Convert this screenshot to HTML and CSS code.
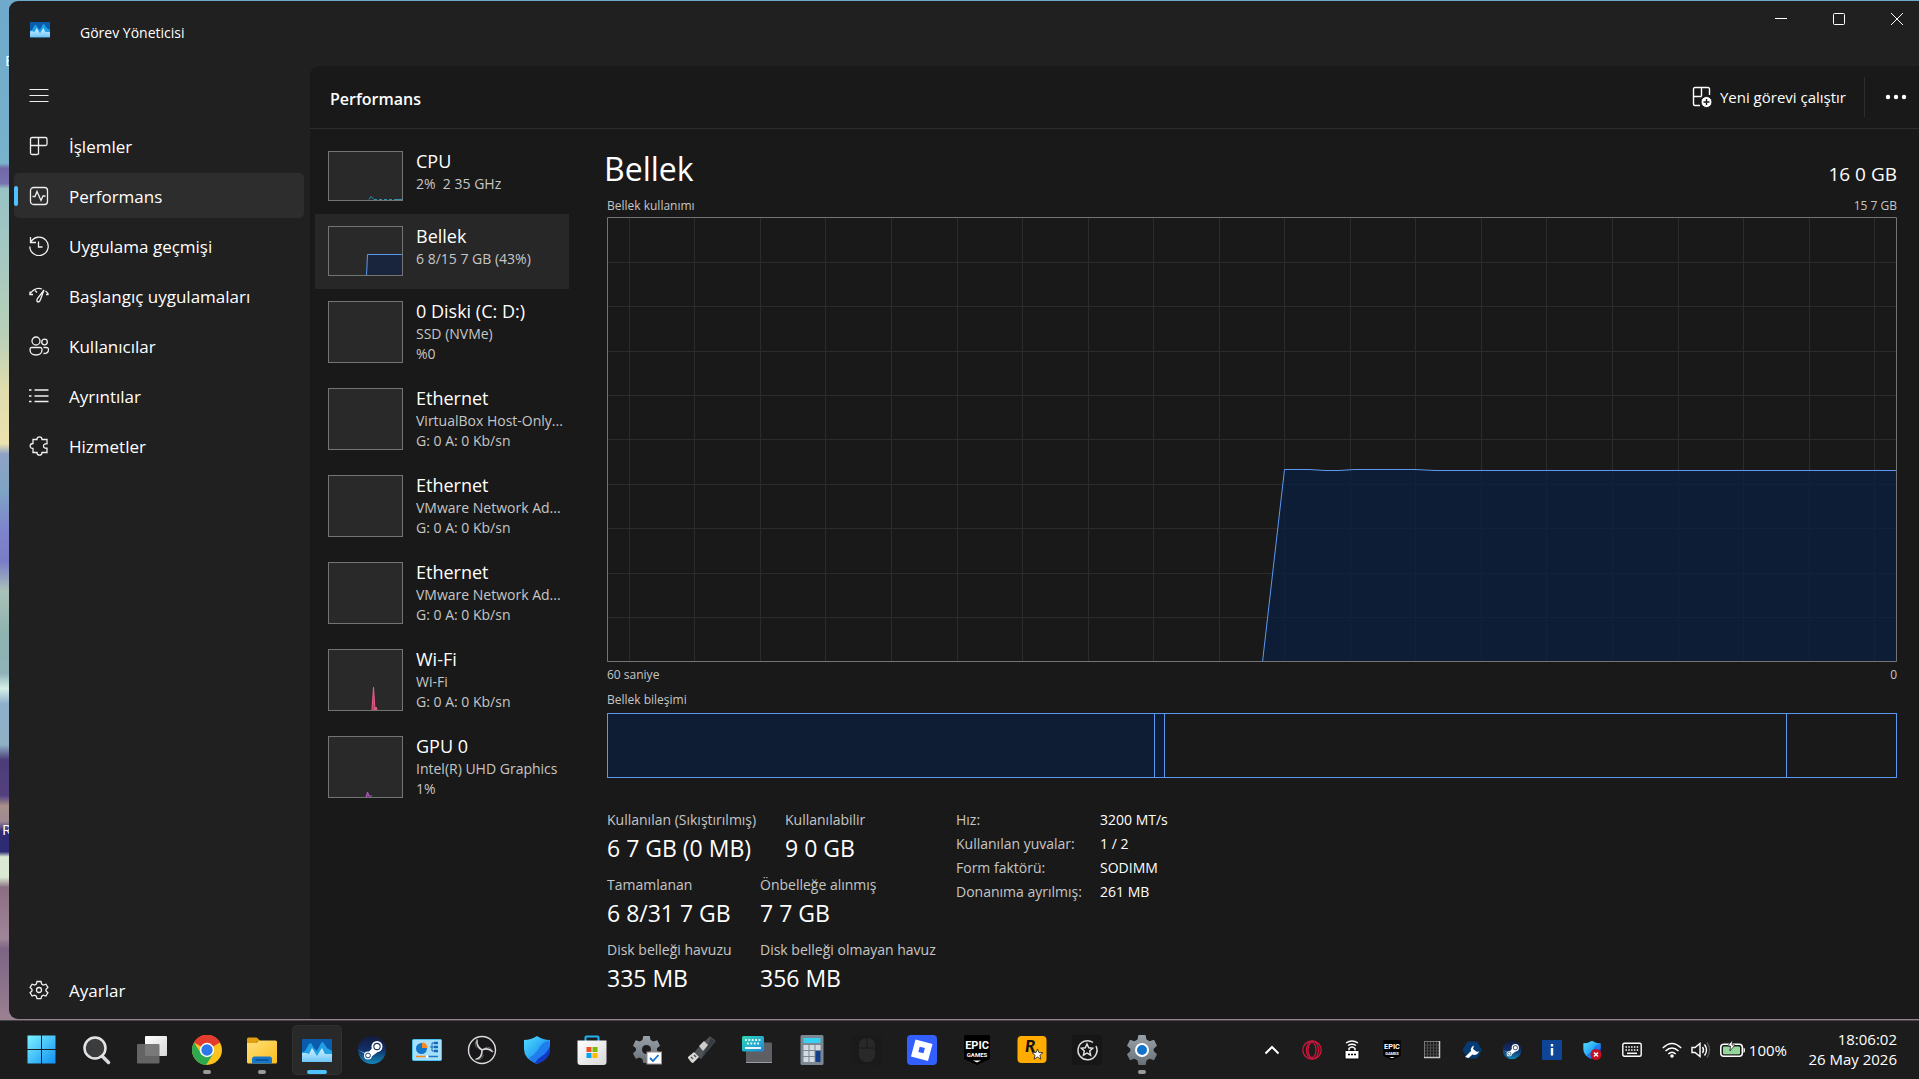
FILE: index.html
```html
<!DOCTYPE html>
<html lang="tr">
<head>
<meta charset="utf-8">
<title>Görev Yöneticisi</title>
<link rel="stylesheet" href="styles.css">
</head>
<body>
<svg class="defs" aria-hidden="true">
  <defs>
    <linearGradient id="g-win" x1="0" y1="0" x2="1" y2="1"><stop offset="0" stop-color="#7df3ff"/><stop offset="1" stop-color="#1090f5"/></linearGradient>
    <linearGradient id="g-steam" x1="0" y1="0" x2="0" y2="1"><stop offset="0" stop-color="#141a3c"/><stop offset="0.5" stop-color="#11306a"/><stop offset="1" stop-color="#1389b8"/></linearGradient>
    <linearGradient id="g-folder" x1="0" y1="0" x2="1" y2="1"><stop offset="0" stop-color="#ffe07a"/><stop offset="1" stop-color="#fbbd1e"/></linearGradient>
    <linearGradient id="g-shield" x1="0" y1="0" x2="1" y2="1"><stop offset="0" stop-color="#54e0ff"/><stop offset="0.5" stop-color="#2ba8f5"/><stop offset="1" stop-color="#1341cf"/></linearGradient>
    <linearGradient id="g-gear" x1="0" y1="0" x2="0" y2="1"><stop offset="0" stop-color="#9aa2a9"/><stop offset="1" stop-color="#697178"/></linearGradient>
    <linearGradient id="g-white" x1="0" y1="0" x2="1" y2="1"><stop offset="0" stop-color="#ffffff"/><stop offset="1" stop-color="#d8d8d8"/></linearGradient>
    <linearGradient id="g-ice" x1="0" y1="0" x2="0" y2="1"><stop offset="0" stop-color="#d6f3ff"/><stop offset="1" stop-color="#6cc4f7"/></linearGradient>
    <linearGradient id="g-kb" x1="0" y1="0" x2="1" y2="1"><stop offset="0" stop-color="#2fd8b4"/><stop offset="1" stop-color="#1c86dd"/></linearGradient>
    <symbol id="i-taskmgr" viewBox="0 0 30 24">
      <rect width="30" height="23" rx="1" fill="#0b5cad"/>
      <path d="M0 13l3-1 4-7 2-1 3 5 3 3 4-8 2-1 4 6 5 3v11H0z" fill="#1f9fe6"/>
      <path d="M0 14h4l3 1 3-6 5 8 5-8 3 6h7v8H0z" fill="url(#g-ice)"/>
    </symbol>
    <symbol id="i-steam" viewBox="0 0 30 30">
      <circle cx="15" cy="15" r="14" fill="url(#g-steam)"/>
      <path d="M1 15l9 4 7-8 5 5-8 6z" fill="#fff"/>
      <circle cx="20" cy="11.500" r="5.500" fill="#fff"/><circle cx="20" cy="11.500" r="3.700" fill="#18305e"/><circle cx="20" cy="11.500" r="2.600" fill="#fff"/>
      <circle cx="11" cy="20.500" r="4" fill="#fff"/><circle cx="11" cy="20.500" r="2.400" fill="none" stroke="#18406e"/>
    </symbol>
    <symbol id="i-shield" viewBox="0 0 30 30">
      <path d="M2 5q7 0 13-4 6 4 13 4v9q0 10-13 15Q2 24 2 14z" fill="url(#g-shield)"/>
      <path d="M27 6q-7 1-10 7T7 23q3 4 8 6l13-16z" fill="#1f7df0"/>
      <path d="M28 11q-3 7-8 10-4 2-7 7l2 1q13-5 13-15z" fill="#1238c8"/>
    </symbol>
    <symbol id="i-epic" viewBox="0 0 30 30">
      <path d="M3.500 0h23q1.500 0 1.500 1.500V24l-13 6-13-6V1.500Q2 0 3.500 0z" fill="#000"/>
      <text x="15" y="14" class="epic-big">EPIC</text>
      <text x="15" y="22" class="epic-small">GAMES</text>
      <path d="M11 25.500h8l-4 2z" fill="#fff"/>
    </symbol>
    <symbol id="i-gear" viewBox="0 0 30 30">
      <path d="M11.500 0h7l1 4.500 3 1.700L27 4.700l3 6-3.300 3v2.600l3.300 3-3 6-4.500-1.500-3 1.700-1 4.500h-7l-1-4.500-3-1.700L3 25.300l-3-6 3.300-3v-2.600L0 10.700l3-6 4.500 1.500 3-1.700z" fill="url(#g-gear)"/>
    </symbol>
  </defs>
</svg>

<div class="desktop">
  <span class="desk-label desk-label-top">E</span>
  <span class="desk-label desk-label-low">R</span>

  <div class="window">
    <header class="titlebar">
      <svg class="app-icon" viewBox="0 0 30 24" preserveAspectRatio="none"><use href="#i-taskmgr"/></svg>
      <h1 class="app-title">Görev Yöneticisi</h1>
      <div class="caption">
        <button aria-label="Simge durumuna küçült"><svg viewBox="0 0 12 12"><path d="M0 5.500h12"/></svg></button>
        <button aria-label="Ekranı kapla"><svg viewBox="0 0 12 12"><rect x="0.500" y="0.500" width="11" height="11" rx="1"/></svg></button>
        <button aria-label="Kapat"><svg viewBox="0 0 12 12"><path d="M0 0l12 12M12 0L0 12"/></svg></button>
      </div>
    </header>

    <div class="workspace">
      <nav class="sidebar">
        <button class="nav-item" aria-label="Gezinti"><svg class="line-icon" viewBox="0 0 20 20"><path d="M.5 3.500h19M.5 9.500h19M.5 15.500h19" stroke-width="1"/></svg></button>
        <a class="nav-item" href="#"><svg class="line-icon" viewBox="0 0 20 20"><path d="M3 1.500h13.500q1.500 0 1.500 1.500v5q0 1.500-1.500 1.500h-15M9.500 1.500v17M3 1.500Q1.500 1.500 1.500 3v14q0 1.500 1.500 1.500h5q1.500 0 1.500-1.500"/></svg><span>İşlemler</span></a>
        <a class="nav-item active" href="#" aria-current="page"><svg class="line-icon" viewBox="0 0 20 20"><rect x="1.500" y="1.500" width="17" height="17" rx="3"/><path d="M3.500 10.500h2.500l2-5 4 9 2-4.500h2.500"/></svg><span>Performans</span></a>
        <a class="nav-item" href="#"><svg class="line-icon" viewBox="0 0 20 20"><path d="M1.500 1v5.500H7M1.800 6.200A9.200 9.200 0 1 1 .8 10.500M9.500 5.500v5.500h4"/></svg><span>Uygulama geçmişi</span></a>
        <a class="nav-item" href="#"><svg class="line-icon" viewBox="0 0 20 20"><path d="M.5 8.500Q6 .5 13 3M1 5.500v3h3M16.500 5q2 1.500 3 3.500M17 8.500h2.500M15 4L8.500 12.500q-1.500 3 .5 3.500 1.800 0 2.500-2.500zM6 4.500l2 2"/></svg><span>Başlangıç uygulamaları</span></a>
        <a class="nav-item" href="#"><svg class="line-icon" viewBox="0 0 20 20"><circle cx="7" cy="5" r="4"/><circle cx="15.500" cy="6" r="2.800"/><path d="M2.500 11.500h9q1.500 0 1.500 2 0 5.500-6 5.500T1 13.500q0-2 1.500-2zM14.500 11.500h3q2 0 2 2 0 4-5 4"/></svg><span>Kullanıcılar</span></a>
        <a class="nav-item" href="#"><svg class="line-icon" viewBox="0 0 20 20"><path d="M5.500 4h14M5.500 10h14M5.500 15.500h14M0 4h2.500M0 10h2.500M0 15.500h2.500"/></svg><span>Ayrıntılar</span></a>
        <a class="nav-item" href="#"><svg class="line-icon" viewBox="0 0 20 20"><path d="M4 3.500h4Q8 .8 10.500.8T13 3.500h5v4.300q-3.500-.3-3.500 2.200t3.500 2.200v4.300h-5q0 2.700-2.500 2.700T8 16.500H4v-4Q1.200 12.500 1.200 10T4 7.500z"/></svg><span>Hizmetler</span></a>
        <a class="nav-item nav-settings" href="#"><svg class="line-icon" viewBox="0 0 20 20"><path d="M8 1.500h4l.7 2.600 1.600.9 2.600-.8 2 3.300-1.900 1.800v1.600l1.900 1.800-2 3.300-2.600-.8-1.600.9-.7 2.600H8l-.7-2.600-1.600-.9-2.600.8-2-3.300L3 10.900V9.300L1.100 7.500l2-3.300 2.600.8 1.600-.9z"/><circle cx="10" cy="10" r="2.500"/></svg><span>Ayarlar</span></a>
      </nav>

      <main class="panel">
        <div class="panel-head">
          <h2>Performans</h2>
          <button class="run-task"><svg viewBox="0 0 20 22"><path d="M17.500 9V3q0-1.500-1.500-1.500H3Q1.500 1.500 1.500 3v15q0 1.500 1.500 1.500h5M9.500 1.500v9M1.500 10.500h8"/><circle cx="14.500" cy="16" r="5.500" class="solid"/><path d="M14.500 13v6M11.500 16h6" class="dark"/></svg>Yeni görevi çalıştır</button>
          <button class="more" aria-label="Diğer"><svg viewBox="0 0 22 6"><circle cx="3" cy="3" r="2.200"/><circle cx="11" cy="3" r="2.200"/><circle cx="19" cy="3" r="2.200"/></svg></button>
        </div>

        <div class="panel-body">
          <div class="resources">
            <button class="resource"><svg class="thumb" viewBox="0 0 75 50"><path d="M41 48.500l2-3 3 3h3M51 48.500h3M56 48.500h3M61 48.500h3M66 48.500h8" stroke="#2f93ad"/></svg>
              <span class="info"><strong>CPU</strong><span>2%&nbsp; 2 35 GHz</span></span></button>
            <button class="resource selected"><svg class="thumb" viewBox="0 0 75 50"><path d="M38.500 50l1-21.500H75V50z" fill="#18253c" stroke="#5c98f2"/></svg>
              <span class="info"><strong>Bellek</strong><span>6 8/15 7 GB (43%)</span></span></button>
            <button class="resource tall"><svg class="thumb" viewBox="0 0 75 62"></svg>
              <span class="info"><strong>0 Diski (C: D:)</strong><span>SSD (NVMe)</span><span>%0</span></span></button>
            <button class="resource tall"><svg class="thumb" viewBox="0 0 75 62"></svg>
              <span class="info"><strong>Ethernet</strong><span>VirtualBox Host-Only...</span><span>G: 0 A: 0 Kb/sn</span></span></button>
            <button class="resource tall"><svg class="thumb" viewBox="0 0 75 62"></svg>
              <span class="info"><strong>Ethernet</strong><span>VMware Network Ad...</span><span>G: 0 A: 0 Kb/sn</span></span></button>
            <button class="resource tall"><svg class="thumb" viewBox="0 0 75 62"></svg>
              <span class="info"><strong>Ethernet</strong><span>VMware Network Ad...</span><span>G: 0 A: 0 Kb/sn</span></span></button>
            <button class="resource tall"><svg class="thumb" viewBox="0 0 75 62"><path d="M44 61l1.500-23L47 61l1-3 1 3" fill="#b8405f" stroke="#e8608a"/></svg>
              <span class="info"><strong>Wi-Fi</strong><span>Wi-Fi</span><span>G: 0 A: 0 Kb/sn</span></span></button>
            <button class="resource tall"><svg class="thumb" viewBox="0 0 75 62"><path d="M38 61l1.500-5 1.500 4h3" fill="#8a3f96" stroke="#b45ac4"/></svg>
              <span class="info"><strong>GPU 0</strong><span>Intel(R) UHD Graphics</span><span>1%</span></span></button>
          </div>

          <section class="detail">
            <div class="detail-head"><h3>Bellek</h3><span class="capacity">16 0 GB</span></div>
            <div class="axis axis-top"><span>Bellek kullanımı</span><span>15 7 GB</span></div>
            <svg class="graph" viewBox="0 0 1290 445" preserveAspectRatio="none">
              <g class="grid">
                <path d="M0 45.500h1290M0 89.500h1290M0 134.500h1290M0 178.500h1290M0 222.500h1290M0 267.500h1290M0 311.500h1290M0 356.500h1290M0 400.500h1290"/>
                <path d="M22.500 0v445M87.500 0v445M153.500 0v445M218.500 0v445M284.500 0v445M350.500 0v445M415.500 0v445M481.500 0v445M546.500 0v445M612.500 0v445M677.500 0v445M743.500 0v445M808.500 0v445M874.500 0v445M939.500 0v445M1005.500 0v445M1071.500 0v445M1136.500 0v445M1202.500 0v445M1267.500 0v445"/>
              </g>
              <path class="area" d="M655.500 445L677.500 252.500H702L718 253.500H732L748 252.500H808L828 253.500H1290V445z"/>
              <path class="curve" d="M655.500 445L677.500 252.500H702L718 253.500H732L748 252.500H808L828 253.500H1290"/>
              <rect class="frame" x="0.500" y="0.500" width="1289" height="444"/>
            </svg>
            <div class="axis"><span>60 saniye</span><span>0</span></div>
            <div class="axis axis-bar"><span>Bellek bileşimi</span></div>
            <div class="composition">
              <div class="used" style="width:42.450%"></div>
              <div class="used" style="width:0.800%"></div>
              <div style="width:48.250%"></div>
            </div>

            <div class="stats">
              <div class="stat-rows">
                <dl class="stat-row wide"><div><dt>Kullanılan (Sıkıştırılmış)</dt><dd>6 7 GB (0 MB)</dd></div><div><dt>Kullanılabilir</dt><dd>9 0 GB</dd></div></dl>
                <dl class="stat-row"><div><dt>Tamamlanan</dt><dd>6 8/31 7 GB</dd></div><div><dt>Önbelleğe alınmış</dt><dd>7 7 GB</dd></div></dl>
                <dl class="stat-row"><div><dt>Disk belleği havuzu</dt><dd>335 MB</dd></div><div><dt>Disk belleği olmayan havuz</dt><dd>356 MB</dd></div></dl>
              </div>
              <table class="specs">
                <tr><th scope="row">Hız:</th><td>3200 MT/s</td></tr>
                <tr><th scope="row">Kullanılan yuvalar:</th><td>1 / 2</td></tr>
                <tr><th scope="row">Form faktörü:</th><td>SODIMM</td></tr>
                <tr><th scope="row">Donanıma ayrılmış:</th><td>261 MB</td></tr>
              </table>
            </div>
          </section>
        </div>
      </main>
    </div>
  </div>
</div>

<footer class="taskbar">
  <div class="apps">
    <button aria-label="Başlat"><svg viewBox="0 0 30 30"><path d="M.5.5H14V14H.5zM15 .5H28.500V14H15zM.5 15H14V28.500H.5zM15 15H28.500V28.500H15z" fill="url(#g-win)"/></svg></button>
    <button aria-label="Ara"><svg viewBox="0 0 30 30"><path d="M19.500 20.500l7 7" stroke="#d6d9dc" stroke-width="3.500" stroke-linecap="round"/><circle cx="13" cy="13" r="10.500" fill="#3a3c3e" stroke="#e4e4e4" stroke-width="2.500"/></svg></button>
    <button aria-label="Görev görünümü"><svg viewBox="0 0 30 30"><rect x="8" y="1" width="22" height="20" rx="1" fill="url(#g-white)"/><rect x="0" y="9" width="22.500" height="19.500" rx="1" fill="#6d6d6d" fill-opacity="0.900"/></svg></button>
    <button class="open" aria-label="Chrome"><svg viewBox="0 0 30 30"><circle cx="15" cy="15" r="15" fill="#fcc31e"/><path d="M15 15L2 7.500A15 15 0 0 1 28 7.500z" fill="#e33b2e"/><path d="M15 8h13.300A15 15 0 0 0 2 7.500z" fill="#e33b2e"/><path d="M2 7.500A15 15 0 0 0 14 30l7.500-11.500L9 18.500z" fill="#2da94f"/><circle cx="15" cy="15" r="7.200" fill="#fff"/><circle cx="15" cy="15" r="5.700" fill="#2a78ea"/></svg></button>
    <button class="open" aria-label="Dosya Gezgini"><svg viewBox="0 0 30 30"><path d="M0 4q0-1.500 1.500-1.500H9q1 0 1.700.8L13 6h-2l-2 2H0z" fill="#e0a010"/><path d="M0 8h9l3-2.500h16.500Q30 5.500 30 7v20q0 1.500-1.500 1.500h-27Q0 28.500 0 27z" fill="url(#g-folder)"/><path d="M5 28.500V24q0-2.500 2.500-2.500h15Q25 21.500 25 24v4.500z" fill="#1577c9"/><path d="M8.500 25h13" stroke="#0b4a8c" stroke-width="1.500"/></svg></button>
    <button class="open current" aria-label="Görev Yöneticisi"><svg viewBox="0 0 30 30"><use href="#i-taskmgr" y="4" width="30" height="24"/></svg></button>
    <button aria-label="Steam"><svg viewBox="0 0 30 30"><use href="#i-steam"/></svg></button>
    <button aria-label="Denetim Masası"><svg viewBox="0 0 30 30"><rect x="0.500" y="4.500" width="29" height="21" rx="1" fill="#a6e0fb" stroke="#4cc0f0"/><circle cx="9.500" cy="13.500" r="5.500" fill="#1376cc"/><path d="M10 7.500q5 0 5.500 5.500H10z" fill="#f58a1f"/><path d="M18 12h4M20 8v8M20 8h2M20 16h2" stroke="#1d66ad" fill="none"/><path d="M22 8h4M22 12h4M22 16h4" stroke="#1668b8" stroke-width="2.600"/><path d="M4 21.500h9" stroke="#f58a1f" stroke-width="1.500"/><path d="M13 21.500h13" stroke="#1d78c4" stroke-width="1.500"/><circle cx="15" cy="21.500" r="1.500" fill="#fff"/></svg></button>
    <button aria-label="OBS"><svg viewBox="0 0 30 30"><circle cx="15" cy="15" r="13.500" fill="#191719" stroke="#dcdcdc" stroke-width="1.400"/><path d="M10 4.500q-1 7 5 10.500M26 17q-5-5-11-2M8.500 24.500q7-1.500 6.500-9.500" fill="none" stroke="#d8d8d8" stroke-width="1.600"/><path d="M10 4.500q-4 5 1 9M26 17q-2-6-8-4.500M8.500 24.500q6 1.500 8-4.500" fill="none" stroke="#777" stroke-width="0.800"/></svg></button>
    <button aria-label="Windows Güvenliği"><svg viewBox="0 0 30 30"><use href="#i-shield"/></svg></button>
    <button aria-label="Microsoft Store"><svg viewBox="0 0 30 30"><path d="M8.500 7V2.200Q8.500 1.500 9.500 1.500h11q1 0 1 .7V7" fill="none" stroke="#22b3f0" stroke-width="2"/><path d="M.5 5.500h29V27q0 3-3 3h-23q-3 0-3-3z" fill="url(#g-white)"/><path d="M9.500 12h5v5h-5z" fill="#f25022"/><path d="M15.500 12h5v5h-5z" fill="#7fba00"/><path d="M9.500 18h5v5h-5z" fill="#00a4ef"/><path d="M15.500 18h5v5h-5z" fill="#ffb900"/></svg></button>
    <button aria-label="Hizmetler"><svg viewBox="0 0 30 30"><use href="#i-gear" x="1" y="1" width="27" height="27"/><circle cx="14.500" cy="14.500" r="4.500" fill="#1d1d1d"/><rect x="15" y="17" width="14.500" height="12" fill="#fff" stroke="#9a8d8d"/><path d="M18 23l3 3 5.500-6" fill="none" stroke="#1673d2" stroke-width="1.800"/></svg></button>
    <button aria-label="USB"><svg viewBox="0 0 30 30"><path d="M9 15L22 2q1-1 2 0l4 3q1 1 0 2L14 24l-7-5z" fill="#4c5256"/><path d="M24 3l4 3L15 22z" fill="#363b3f"/><path d="M12 11l5-5 4 4-5 6z" fill="#cfcdca"/><path d="M1 22l6-5 5 5-6 6q-1 0-2-1l-3-4z" fill="#d9d9d6"/><path d="M4 22l2 2M7 20l2 2" stroke="#555" stroke-width="1.500"/></svg></button>
    <button aria-label="Ekran klavyesi"><svg viewBox="0 0 30 30"><rect x="4" y="7.500" width="26" height="20.500" rx="1" fill="#5d5f63"/><path d="M4 27.500h26" stroke="#9b9da0"/><rect x="0" y="1" width="22" height="15.500" rx="1.500" fill="url(#g-kb)"/><path d="M3 5h16M5 8.500h13" stroke="#eafcff" stroke-width="1.800" stroke-dasharray="1.800 1.600"/><path d="M3 13h16" stroke="#fff" stroke-width="1.800"/></svg></button>
    <button aria-label="Hesap Makinesi"><svg viewBox="0 0 30 30"><rect x="3.500" y="0" width="23" height="30" rx="1.500" fill="#7c8791"/><rect x="6.500" y="3" width="17" height="5" fill="#38d1f3"/><path d="M6.500 10h5v5h-5zM12.500 10h5v5h-5zM18.500 10h5v5h-5zM6.500 16h5v5h-5zM12.500 16h5v5h-5zM6.500 22h5v5h-5zM12.500 22h5v5h-5z" fill="#d3dae2"/><path d="M18.500 16h5v11h-5z" fill="#123f8a"/></svg></button>
    <button aria-label="Fare"><svg viewBox="0 0 30 30"><rect width="30" height="30" rx="3" fill="#1a1a1a"/><rect x="7" y="3" width="16" height="24" rx="7" fill="#292929"/><path d="M7 13h16M15 3v10" stroke="#1a1a1a"/></svg></button>
    <button aria-label="Roblox"><svg viewBox="0 0 30 30"><rect width="30" height="30" rx="4" fill="#335fff"/><path d="M8.500 4.500l17 4.500-4.500 17L4 21.500z" fill="#fff"/><path d="M12.700 11.700l5.200 1.300-1.400 5.300-5.200-1.400z" fill="#335fff"/></svg></button>
    <button aria-label="Epic Games"><svg viewBox="0 0 30 30"><use href="#i-epic"/></svg></button>
    <button aria-label="Rockstar Games"><svg viewBox="0 0 30 30"><rect x="0.500" y="1" width="29" height="27" rx="4" fill="#ffab00"/><text x="8" y="17" class="rockstar">R</text><path d="M20.500 14l1.400 3.500 4 .2-3 2.500 1 4-3.400-2.200-3.400 2.200 1-4-3-2.500 4-.2z" fill="#fff" stroke="#222" stroke-width="0.800"/></svg></button>
    <button aria-label="Yıldız"><svg viewBox="0 0 30 30"><rect width="30" height="30" rx="4" fill="#161616"/><path d="M21 7.500A9.500 9.500 0 1 0 24 11" fill="none" stroke="#dcdcdc" stroke-width="1.500"/><path d="M15 9l1.700 3.800 4 .4-3 2.800.9 4.200L15 18l-3.600 2.200.9-4.200-3-2.800 4-.4z" fill="none" stroke="#e6e6e6" stroke-width="1.400"/></svg></button>
    <button class="open" aria-label="Ayarlar"><svg viewBox="0 0 30 30"><use href="#i-gear" width="30" height="30"/><circle cx="15" cy="15" r="6" fill="#1272cc" stroke="#fff" stroke-width="2"/></svg></button>
  </div>

  <div class="tray">
    <button aria-label="Gizli simgeleri göster"><svg viewBox="0 0 20 20"><path d="M3.500 13.500L10 7l6.500 6.500" fill="none" stroke="#fff" stroke-width="2"/></svg></button>
    <button aria-label="Opera"><svg viewBox="0 0 20 20"><g fill="none" stroke="#d5173f" stroke-width="1.200"><circle cx="10" cy="10" r="9.200"/><ellipse cx="10" cy="10" rx="4" ry="7.500"/><ellipse cx="10.500" cy="10" rx="6" ry="8.800"/></g></svg></button>
    <button aria-label="Kablosuz kilit"><svg viewBox="0 0 20 20"><rect x="3" y="10.500" width="14" height="8.500" rx="1" fill="#fff" stroke="#000"/><path d="M6 14.500h2M9 14.500h2M12 14.500h2" stroke="#000" stroke-width="1.500"/><path d="M7 10.500V8.500q3-3 6 0v2M6 5.500q4-2.500 8 0M4 3q6-4 12 0" fill="none" stroke="#fff" stroke-width="1.400"/></svg></button>
    <button aria-label="Epic Games"><svg viewBox="0 0 30 30"><use href="#i-epic"/></svg></button>
    <button aria-label="Görev Yöneticisi"><svg viewBox="0 0 20 20"><rect x="2.500" y="1.500" width="15" height="16" fill="#1b1b1b" stroke="#777"/><path d="M3 5h14M3 8h14M3 11h14M3 14h14M5.500 2v15M8.500 2v15M11.500 2v15M14.500 2v15" stroke="#4b4b4b"/><path d="M2 17.500h15.500V1" fill="none" stroke="#c6c6c6" stroke-width="1.500"/></svg></button>
    <button aria-label="Onarım"><svg viewBox="0 0 20 20"><path d="M5.500 1.500h9.500L20 10l-5 8.500H5.500L.5 10z" fill="#063a72"/><path d="M3 17l6-6q-1-3.500 3-5.500l-1 3.500 4 3 2-1q-1 4-5 4l-1.500-.5L6.500 18z" fill="#fff"/></svg></button>
    <button aria-label="Steam"><svg viewBox="0 0 30 30"><use href="#i-steam"/></svg></button>
    <button aria-label="Bilgi"><svg viewBox="0 0 20 20"><rect width="20" height="20" rx="1" fill="#0f4596"/><path d="M10 4v2.500M10 8v7.500" stroke="#fff" stroke-width="2.400"/></svg></button>
    <button aria-label="Windows Güvenliği"><svg viewBox="0 0 20 20"><use href="#i-shield" width="20" height="20"/><circle cx="14" cy="14.500" r="5.500" fill="#c50f1f"/><path d="M12 12.500l4 4M16 12.500l-4 4" stroke="#fff" stroke-width="1.500"/></svg></button>
    <button aria-label="Dokunmatik klavye"><svg viewBox="0 0 20 20"><rect x="0.800" y="3.300" width="18.400" height="13" rx="1.500" fill="none" stroke="#fff" stroke-width="1.400"/><path d="M3.500 7h13M3.500 10h13" stroke="#fff" stroke-width="1.500" stroke-dasharray="1.500 1.300"/><path d="M5 13.300h10" stroke="#fff" stroke-width="1.500"/></svg></button>
    <button class="system" aria-label="Ağ, ses ve pil">
      <svg viewBox="0 0 20 20"><g fill="none" stroke="#fff" stroke-width="1.500"><path d="M.8 8q9.200-9 18.400 0M3.500 11q6.500-6 13 0M6.300 14q3.700-3.500 7.400 0"/></g><circle cx="10" cy="16" r="1.800" fill="#fff"/></svg>
      <svg viewBox="0 0 20 20"><g fill="none" stroke="#fff" stroke-width="1.400"><path d="M1 7.500h3L9 3.500v13L4 12.500H1zM11.500 7q2 3 0 6M13.500 4.500q4 5.500 0 11"/><path d="M16 2.500q5 7.500 0 15" stroke="#555"/></g></svg>
      <svg class="battery" viewBox="0 0 25 20"><rect x="0.800" y="4.300" width="21.500" height="12" rx="3" fill="none" stroke="#fff" stroke-width="1.500"/><rect x="3" y="6.500" width="17" height="7.700" rx="1" fill="#93d79a"/><path d="M23.500 7.500q1.500 0 1.500 2.800t-1.500 2.700z" fill="#fff"/><path d="M12.500 0l-5 6h3l-.5 5 5-6h-3z" fill="#fff" stroke="#1d1d1d" stroke-width="0.800"/></svg>
      <span>100%</span>
    </button>
    <button class="clock"><span>18:06:02</span><span>26 May 2026</span></button>
  </div>
</footer>
</body>
</html>
```
FILE: styles.css
```css
* { box-sizing: border-box; }

body {
  margin: 0;
  min-height: 100vh;
  display: flex;
  flex-direction: column;
  background: #1c1c1c;
  color: #fff;
  font-family: "Open Sans", "Noto Sans", sans-serif;
  font-size: 14px;
  line-height: 20px;
}

button {
  margin: 0;
  padding: 0;
  border: 0;
  background: none;
  color: inherit;
  font: inherit;
  text-align: left;
}

h1, h2, h3, dl, dd { margin: 0; }

.defs { position: absolute; width: 0; height: 0; }

/* Desktop and window */
.desktop {
  position: relative;
  flex: 1;
  display: flex;
  overflow: hidden;
  padding: 1px 0 1px 9px;
  border-bottom: 1px solid #47474a;
  background:
    linear-gradient(to bottom, #6fa9cb 0, #79b2cb 16%, #7068a8 16.500%, #7872b0 18%, #98c2c4 18.500%, #a5c8c2 25%, #b9d0b8 33%, #dfdcae 38%, #ece2ae 43.500%, #8fa3c4 44.500%, #7fa4c4 48%, #7d84cc 52%, #7a7cc6 55%, #a9c3b8 58%, #8fb3b0 62%, #8fb3b8 66%, #d5eee8 67.500%, #8fb0cc 69%, #8fb0c4 73%, #4b3d78 74.500%, #53417e 78%, #a88f8a 79%, #a08a92 80.500%, #2f2b73 81.500%, #2f2b73 83.500%, #dbe8d4 84%, #dbe8d4 86%, #8b6f80 87%, #a08698 92%, #7c6486 93%, #9b8190 100%);
}

.desk-label { position: absolute; font-size: 15px; }
.desk-label-top { left: 5px; top: 50px; }
.desk-label-low { left: 2px; top: 819px; }

.window {
  position: relative;
  flex: 1;
  min-width: 0;
  display: flex;
  flex-direction: column;
  border-radius: 9px 0 0 9px;
  background: #202020;
}

.titlebar { display: flex; align-items: center; height: 65px; padding: 0 0 2px 21px; }
.app-icon { width: 20px; height: 16px; margin-bottom: 5px; }
.app-title { margin-left: 30px; font-size: 14px; font-weight: 400; }
.caption { display: flex; gap: 14px; align-self: flex-start; margin-left: auto; }
.caption button { display: grid; place-items: center; width: 44px; height: 36px; }
.caption svg { width: 12px; height: 12px; overflow: visible; fill: none; stroke: #fff; }

.workspace { flex: 1; display: flex; }

/* Sidebar */
.sidebar {
  display: flex;
  flex-direction: column;
  gap: 5px;
  width: 301px;
  padding: 7px 6px 7px 5px;
}
.nav-item {
  position: relative;
  display: flex;
  align-items: center;
  gap: 20px;
  height: 45px;
  padding-left: 15px;
  border-radius: 5px;
  color: #fff;
  font-size: 17px;
  text-decoration: none;
}
.nav-item span { padding-top: 2px; }
.nav-item.active { background: #2d2d2d; }
.nav-item.active::before {
  content: "";
  position: absolute;
  left: 0;
  width: 4px;
  height: 20px;
  border-radius: 2px;
  background: #4cc2ff;
}
.nav-settings { margin-top: auto; }
.line-icon { width: 20px; height: 20px; fill: none; stroke: #f0f0f0; stroke-width: 1.300; }

/* Performance panel */
.panel {
  flex: 1;
  min-width: 0;
  display: flex;
  flex-direction: column;
  border-radius: 9px 0 0 0;
  background: #191919;
}
.panel-head {
  display: flex;
  align-items: center;
  height: 63px;
  padding: 0 12px 0 20px;
  border-bottom: 1px solid #2d2d2d;
}
.panel-head h2 { padding-top: 3px; font-size: 16px; font-weight: 600; }
.run-task { display: flex; align-items: center; gap: 8px; margin-left: auto; font-size: 15px; }
.run-task svg { width: 20px; height: 22px; fill: none; stroke: #fff; stroke-width: 1.400; }
.run-task .solid { fill: #fff; stroke: #191919; stroke-width: 1; }
.run-task .dark { stroke: #191919; }
.more {
  display: grid;
  place-items: center;
  height: 40px;
  margin-left: 18px;
  padding-left: 20px;
  border-left: 1px solid #2d2d2d;
}
.more svg { width: 22px; height: 6px; fill: #fff; }

.panel-body { flex: 1; display: flex; }

.resources { width: 259px; padding: 10px 0 0 5px; }
.resource {
  display: flex;
  gap: 13px;
  width: 100%;
  padding: 12px 0 13px 13px;
  white-space: nowrap;
}
.resource.selected { background: #272727; }
.thumb {
  flex: none;
  width: 75px;
  height: 50px;
  background: #292929;
  outline: 1px solid #747474;
  outline-offset: -1px;
  fill: none;
}
.tall .thumb { height: 62px; }
.info { display: flex; flex-direction: column; margin: -2px 0; color: #c6c6c6; }
.info strong { color: #fff; font-size: 18px; font-weight: 400; line-height: 25px; }

/* Memory detail */
.detail { flex: 1; min-width: 0; display: flex; flex-direction: column; padding: 18px 22px 25px 38px; }
.detail-head { display: flex; align-items: baseline; justify-content: space-between; }
.detail-head h3 { margin-left: -3px; font-size: 32px; font-weight: 400; line-height: 44px; }
.capacity { font-size: 19px; }
.axis { display: flex; justify-content: space-between; margin-top: 3px; color: #c6c6c6; font-size: 12px; }
.axis-top { margin: 5px 0 1px; }
.axis-bar { margin: 5px 0 3px; }

.graph { display: block; flex: 1 1 300px; width: 100%; height: 300px; min-height: 200px; }
.graph path, .graph rect { vector-effect: non-scaling-stroke; fill: none; }
.graph .grid path { stroke: #2c2c2c; }
.graph .area { fill: #0a1f3f; fill-opacity: 0.750; }
.graph .curve { stroke: #5c98f2; }
.graph .frame { stroke: #747474; }

.composition { display: flex; height: 65px; border: 1px solid #5c98f2; }
.composition div { border-right: 1px solid #5c98f2; }
.composition .used { background: #0e1d34; }

.stats { display: flex; margin-top: 30px; }
.stat-rows { display: flex; flex-direction: column; gap: 11px; width: 349px; padding-top: 2px; white-space: nowrap; }
.stat-row { display: grid; grid-template-columns: 153px 1fr; }
.stat-row.wide { grid-template-columns: 178px 1fr; }
.stat-row dt { color: #c6c6c6; }
.stat-row dd { padding-top: 2px; font-size: 23px; line-height: 32px; }

.specs { align-self: flex-start; border-collapse: collapse; line-height: 24px; white-space: nowrap; }
.specs th { width: 144px; padding: 0; color: #c6c6c6; font-weight: 400; text-align: left; }
.specs td { padding: 0; }

/* Taskbar */
.taskbar { display: flex; justify-content: space-between; height: 58px; padding: 4px 22px 4px 17px; background: #1c1c1c; }
.apps { display: flex; gap: 5px; }
.apps button {
  position: relative;
  display: grid;
  place-items: center;
  width: 50px;
  height: 50px;
  border-radius: 5px;
}
.apps svg { width: 30px; height: 30px; }
.apps .current { background: #292929; box-shadow: inset 0 0 0 1px #303030; }
.apps .open::after {
  content: "";
  position: absolute;
  bottom: 1px;
  width: 8px;
  height: 4px;
  border-radius: 2px;
  background: #9a9a9a;
}
.apps .current::after { width: 20px; background: #4cc2ff; }

.tray { display: flex; align-items: center; }
.tray button { display: grid; place-items: center; width: 40px; height: 50px; }
.tray svg { width: 20px; height: 20px; }
.tray .system { display: flex; align-items: center; width: auto; padding-left: 10px; gap: 9px; font-size: 15px; }
.tray .system .battery { width: 25px; }
.tray .system span { margin-left: -5px; }
.tray .clock {
  display: flex;
  flex-direction: column;
  align-items: flex-end;
  justify-content: center;
  width: 110px;
  padding-bottom: 2px;
  font-size: 15px;
}

/* Lettering inside the game launcher icons */
.epic-big { fill: #fff; font: 700 11px "Roboto", sans-serif; text-anchor: middle; }
.epic-small { fill: #fff; font: 700 6px "Roboto", sans-serif; text-anchor: middle; }
.rockstar { fill: #111; font: italic 900 17px "Lato", sans-serif; }
```
